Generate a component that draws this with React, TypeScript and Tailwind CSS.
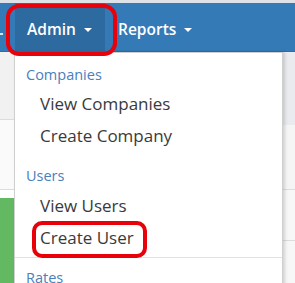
const font = { fontFamily: '"Open Sans", "Liberation Sans", sans-serif' };

function Caret() {
  return (
    <span className="ml-[8px] inline-block w-0 h-0 border-l-[4px] border-r-[4px] border-t-[4px] border-l-transparent border-r-transparent border-t-white align-middle" />
  );
}

function Header({ label, className = "" }: { label: string; className?: string }) {
  return (
    <div className={`h-[27px] flex items-center pl-[11px] text-[14.5px] text-[#4a80bb] ${className}`}>
      {label}
    </div>
  );
}

function Item({ label }: { label: string }) {
  return (
    <div className="h-[32px] flex items-center pl-[25px] text-[17px] text-[#3a3a3a]">{label}</div>
  );
}

export default function App() {
  return (
    <div className="relative w-[295px] h-[283px] overflow-hidden bg-white" style={font}>
      {/* top strip */}
      <div className="h-[3px] bg-[#dde2e8]" />

      {/* navbar */}
      <div className="h-[49px] bg-[#337ab7] border-b border-[#2e6da4] flex items-stretch pl-[15px] relative">
        <div className="absolute left-0 top-[30px] w-[3px] h-[2px] bg-white/80" />
        <div className="w-[90px] bg-[#2d6aa0] flex items-center pt-[5px] pl-[12px] text-white text-[15.5px] font-semibold">
          Admin
          <Caret />
        </div>
        <div className="flex items-center pt-[5px] pl-[13px] text-white text-[15.5px] font-semibold">
          Reports
          <Caret />
        </div>
      </div>

      {/* page behind */}
      <div className="flex h-[231px]">
        <div className="w-[14px] flex flex-col">
          <div className="h-[68px] bg-[#f1f1f1] border-b border-[#dcdcdc]" />
          <div className="h-[70px] bg-[#fafafa] border-b border-[#dcdcdc]" />
          <div className="h-[8px] bg-white" />
          <div className="flex-1 bg-[#62b962]" />
        </div>
        <div className="flex-1" />
        <div className="w-[12px] flex flex-col">
          <div className="h-[73px] bg-[#e9ebee]" />
          <div className="h-[65px] bg-[#f5f5f5] border-b border-[#dcdcdc]" />
          <div className="h-[51px] bg-[#f7f7f7] border-b border-[#dcdcdc]" />
          <div className="flex-1 bg-[#f7f7f7]" />
        </div>
      </div>

      {/* dropdown menu */}
      <div className="absolute left-[14px] top-[52px] w-[269px] h-[240px] bg-white border border-[#cfcfcf] shadow-[2px_0_3px_rgba(0,0,0,0.15)] pt-[8px]">
        <Header label="Companies" />
        <Item label="View Companies" />
        <Item label="Create Company" />
        <Header label="Users" className="mt-[10px] h-[28px]" />
        <Item label="View Users" />
        <Item label="Create User" />
        <div className="mt-[3px] h-px bg-[#e2e2e2]" />
        <Header label="Rates" className="mt-[6px]" />
      </div>

      {/* annotation rings */}
      <div className="absolute left-[6px] top-[4px] w-[111px] h-[52px] border-[4px] border-[#e8000b] rounded-[13px]" />
      <div className="absolute left-[32px] top-[221px] w-[115px] h-[37px] border-[4px] border-[#e8000b] rounded-[10px]" />
    </div>
  );
}
